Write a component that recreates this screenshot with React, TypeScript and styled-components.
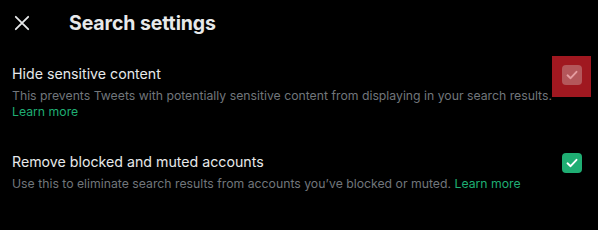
import styled, { createGlobalStyle } from 'styled-components'

const GlobalStyle = createGlobalStyle`
    html, body {
        margin: 0;
        background: #000;
    }
    body {
        font-family: Inter, "Noto Sans", sans-serif;
        -webkit-font-smoothing: antialiased;
    }
`

const Check = () => (
    <svg width="14" height="14" viewBox="0 0 14 14" fill="none">
        <path d="M2.5 7.3 L5.6 10.2 L11.5 3.8" stroke="currentColor" strokeWidth="1.9" strokeLinecap="round" strokeLinejoin="round" />
    </svg>
)

const App = () => {
    return (
        <Page>
            <GlobalStyle />
            <Header>
                <CloseButton aria-label="Close">
                    <svg width="20" height="20" viewBox="0 0 20 20">
                        <path d="M3.8 3.8 L16.2 16.2 M16.2 3.8 L3.8 16.2" stroke="#e7e9ea" strokeWidth="1.8" strokeLinecap="round" />
                    </svg>
                </CloseButton>
                <Title>Search settings</Title>
            </Header>
            <Row>
                <Text>
                    <Label>Hide sensitive content</Label>
                    <Description>
                        This prevents Tweets with potentially sensitive content from displaying in your search results.{' '}
                        <Link href="#">Learn more</Link>
                    </Description>
                </Text>
                <CheckCell>
                    <Highlight />
                    <Box $muted>
                        <Check />
                    </Box>
                </CheckCell>
            </Row>
            <Row>
                <Text>
                    <Label>Remove blocked and muted accounts</Label>
                    <Description>
                        Use this to eliminate search results from accounts you’ve blocked or muted.{' '}
                        <Link href="#">Learn more</Link>
                    </Description>
                </Text>
                <CheckCell>
                    <Box>
                        <Check />
                    </Box>
                </CheckCell>
            </Row>
        </Page>
    )
}

const Page = styled.div`
    width: 598px;
    height: 230px;
    background: #000;
    overflow: hidden;
`

const Header = styled.div`
    display: flex;
    align-items: center;
    height: 46px;
    padding: 0 12px;
`

const CloseButton = styled.button`
    display: flex;
    align-items: center;
    justify-content: center;
    width: 20px;
    height: 20px;
    padding: 0;
    margin: 0 37px 0 0;
    border: none;
    background: none;
`

const Title = styled.h2`
    margin: 0;
    font-size: 19.5px;
    font-weight: 700;
    color: #e7e9ea;
    letter-spacing: -0.1px;
`

const Row = styled.div`
    display: flex;
    align-items: flex-start;
    gap: 10px;
    padding: 18px 16px 12px 12px;
    & + & {
        margin-top: 2px;
    }
`

const Text = styled.div`
    flex: 1;
`

const Label = styled.div`
    font-size: 14.2px;
    line-height: 20px;
    color: #e7e9ea;
    margin-bottom: 4px;
`

const Description = styled.div`
    font-size: 12.25px;
    line-height: 16px;
    color: #71767b;
`

const Link = styled.a`
    color: #1fae73;
    text-decoration: none;
`

const CheckCell = styled.div`
    position: relative;
    margin-top: 1px;
`

const Highlight = styled.div`
    position: absolute;
    top: -9px;
    left: -10px;
    right: -9px;
    bottom: -12px;
    background: #a01820;
`

const Box = styled.div<{ $muted?: boolean }>`
    position: relative;
    display: flex;
    align-items: center;
    justify-content: center;
    width: 20px;
    height: 20px;
    border-radius: 4px;
    background: ${p => (p.$muted ? '#b4575b' : '#1fae73')};
    color: ${p => (p.$muted ? '#e59ca0' : '#fff')};
`

export default App
